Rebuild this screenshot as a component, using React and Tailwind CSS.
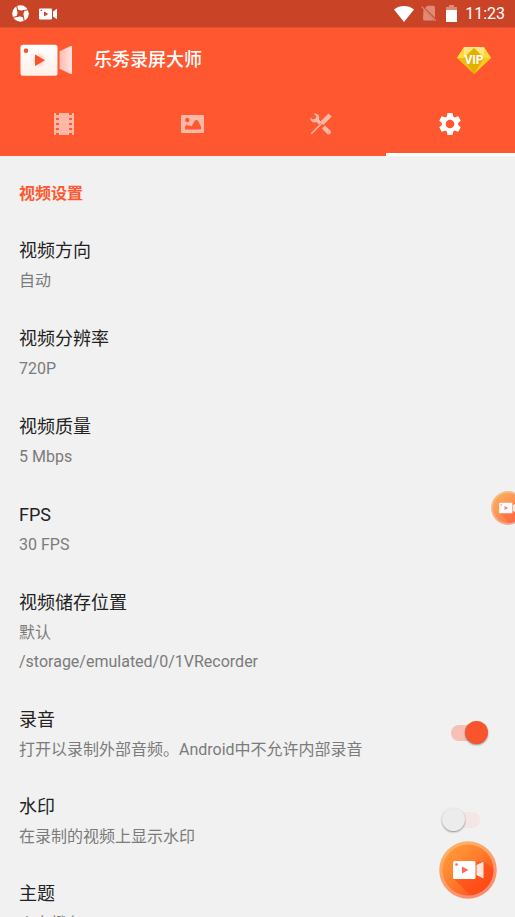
import React, { useState } from 'react';

const textSettings = [
  { title: '视频方向', lines: ['自动'] },
  { title: '视频分辨率', lines: ['720P'] },
  { title: '视频质量', lines: ['5 Mbps'] },
  { title: 'FPS', lines: ['30 FPS'] },
  { title: '视频储存位置', lines: ['默认', '/storage/emulated/0/1VRecorder'] },
];

function SpinnerMark() {
  return (
    <svg viewBox="0 0 17 17" className="size-[17px]" aria-hidden="true">
      <circle cx="8.5" cy="8.5" r="8.3" fill="#fff" />
      <path d="M5.500 4.500 8.500 5.500 12.500 5.500 11.500 8.500 11.500 12.500 8.500 11.500 4.500 11.500 5.500 8.500Z" fill="#c94427" />
      <path d="M5.800 6.500 4.800 1M10.500 5.800 16 4.800M11.200 10.500 12.200 16M6.500 11.200 1 12.200" stroke="#c94427" strokeWidth="1.100" />
    </svg>
  );
}

function MiniCamera() {
  return (
    <svg viewBox="0 0 18 12" className="h-3 w-[18px]" aria-hidden="true">
      <rect width="13" height="11" y=".5" rx="1" fill="#fff" />
      <path d="m14 3.5 4-2.8v10.6l-4-2.8Z" fill="#fff" />
      <path d="m5 3.5 4.3 2.5L5 8.5Z" fill="#c94427" />
      <circle cx="2.3" cy="2.5" r=".8" fill="#c94427" />
    </svg>
  );
}

function StatusBar() {
  return (
    <div className="flex h-7 shrink-0 items-center border-b border-[#e34f2d] bg-[#c94427] px-3 text-white">
      <SpinnerMark />
      <span className="ml-[10px] flex"><MiniCamera /></span>
      <div className="ml-auto flex items-center">
        <svg viewBox="0 0 20 16" className="h-4 w-5" aria-hidden="true">
          <path d="M0 3.5C5.5-1.1 14.500-1.100 20 3.500L10 16Z" fill="#fff" />
        </svg>
        <svg viewBox="0 0 16 17" className="ml-[7px] h-[17px] w-4" aria-hidden="true">
          <path d="M6.500.8H12.500Q14 .8 14 2.300V12.800L4 2.900ZM2.500 4.300 13.500 15.500H3.500Q2 15.500 2 14Z" fill="#df8a77" />
          <path d="m.7 1.700 14 14" stroke="#df8a77" strokeWidth="1.200" />
        </svg>
        <svg viewBox="0 0 11 17" className="ml-[9px] h-[17px] w-[11px]" aria-hidden="true">
          <path d="M0 2h3V0h5v2h3v3H0Z" fill="#df8a77" />
          <path d="M0 5h11v12H0Z" fill="#fff" />
        </svg>
        <time className="ml-2 -mr-[2px] text-[16px] leading-5">11:23</time>
      </div>
    </div>
  );
}

function Logo() {
  return (
    <svg viewBox="0 0 52 32" className="h-8 w-[52px]" aria-hidden="true">
      <defs>
        <linearGradient id="logoBody" x2="0" y2="1">
          <stop stopColor="#fff" />
          <stop offset="1" stopColor="#fff0e8" />
        </linearGradient>
        <linearGradient id="logoLens">
          <stop stopColor="#ffbcb0" />
          <stop offset="1" stopColor="#ffe4df" />
        </linearGradient>
        <radialGradient id="logoGlow">
          <stop stopColor="#ffb79d" />
          <stop offset="1" stopColor="#ffb79d" stopOpacity="0" />
        </radialGradient>
      </defs>
      <rect x=".5" y=".8" width="37" height="31" rx="2.500" fill="url(#logoBody)" />
      <path d="M39.500 7.200 50.600 2.100Q52 1.500 52 3v26q0 1.500-1.400.9L39.500 24.800Z" fill="url(#logoLens)" />
      <ellipse cx="19" cy="16" rx="7" ry="8" fill="url(#logoGlow)" />
      <path d="M15 10.500 25 16.300 15 22Z" fill="#f8522e" />
      <circle cx="6" cy="6.700" r="2.300" fill="#f8522e" />
    </svg>
  );
}

function VipBadge() {
  return (
    <svg viewBox="0 0 34 27" className="h-[27px] w-[34px]" aria-hidden="true">
      <path d="M7 0h20l7 11-17 16L0 11Z" fill="#edbd0e" />
      <path d="M7 0h20l7 11H0Z" fill="#ffd83a" />
      <path d="M7 0h20v9L17 1 7 9Z" fill="#ffe583" />
      <path d="m17 1 10 10-10 16L7 11Z" fill="#e2b000" />
      <path d="m17 27 17-16h-7Z" fill="#f6ca22" />
      <text x="17" y="17" textAnchor="middle" fontFamily="Roboto, sans-serif" fontWeight="700" fontSize="12" fill="#fff">VIP</text>
    </svg>
  );
}

function FilmIcon() {
  return (
    <svg viewBox="0 0 20 22" className="h-[22px] w-5" fill="currentColor" aria-hidden="true">
      <path fillRule="evenodd" d="M0 0h2v2h3V0h10v2h3V0h2v22h-2v-2h-3v2H5v-2H2v2H0ZM2 5v2h3V5Zm13 0v2h3V5ZM2 10v2h3v-2Zm13 0v2h3v-2ZM2 15v2h3v-2Zm13 0v2h3v-2Z" />
    </svg>
  );
}

function PhotoIcon() {
  return (
    <svg viewBox="0 0 23 18" className="h-[18px] w-[23px]" fill="currentColor" aria-hidden="true">
      <path fillRule="evenodd" d="M1 0h21q1 0 1 1v16q0 1-1 1H1q-1 0-1-1V1Q0 0 1 0Zm5.300 2.800a2.200 2.200 0 1 0 0 4.400 2.200 2.200 0 0 0 0-4.400ZM4 14.500h16v-2.700L17 5.700l-1.600-1-1.600 1-3 5.500L9 10.500 7.700 11 5.500 9.500 4 12Z" />
    </svg>
  );
}

function ToolsIcon() {
  return (
    <svg viewBox="0 0 22 22" className="size-[22px]" aria-hidden="true">
      <path d="m13.500 14 5.500 5.500" stroke="currentColor" strokeWidth="4.500" />
      <circle cx="18.700" cy="19.300" r="2.200" fill="currentColor" />
      <path d="M3.500.8Q7-.5 8.700 2.500 9.600 4.500 9 6.500l2.500 2.500L9 11.500 6.500 9Q3 10.200 1.200 7.800.3 6.500.5 4.500L2.800 6.500 5.700 5.600 6.300 3Z" fill="currentColor" />
      <path d="m10 9 8.500-8.500 3.200 3L13.500 12Z" fill="currentColor" />
      <path d="m1.300 20.700 11-11" stroke="currentColor" strokeWidth="1.500" />
    </svg>
  );
}

function GearIcon() {
  return (
    <svg viewBox="2 2 20 20" className="size-[22px]" fill="currentColor" aria-hidden="true">
      <path d="M19.430 12.980c.04-.32.07-.64.07-.98s-.03-.66-.07-.98l2.110-1.650c.19-.15.24-.42.12-.64l-2-3.460c-.12-.22-.39-.3-.61-.22l-2.490 1c-.52-.4-1.080-.73-1.690-.98l-.38-2.650C14.460 2.180 14.250 2 14 2h-4c-.25 0-.46.18-.49.42l-.38 2.650c-.61.25-1.170.59-1.690.98l-2.490-1c-.23-.09-.49 0-.61.22l-2 3.460c-.13.22-.07.49.12.64l2.110 1.650c-.04.32-.07.65-.07.98s.03.66.07.98l-2.110 1.650c-.19.15-.24.42-.12.64l2 3.460c.12.22.39.3.61.22l2.490-1c.52.4 1.080.73 1.690.98l.38 2.650c.03.24.24.42.49.42h4c.25 0 .46-.18.49-.42l.38-2.650c.61-.25 1.170-.59 1.690-.98l2.490 1c.23.09.49 0 .61-.22l2-3.460c.12-.22.07-.49-.12-.64l-2.110-1.650ZM12 15.900a3.900 3.900 0 1 1 0-7.800 3.900 3.900 0 0 1 0 7.800Z" />
    </svg>
  );
}

const tabs = [
  { label: '视频', Icon: FilmIcon },
  { label: '图片', Icon: PhotoIcon },
  { label: '工具', Icon: ToolsIcon },
  { label: '设置', Icon: GearIcon },
];

function Tabs() {
  const [active, setActive] = useState(3);
  return (
    <nav className="grid h-16 grid-cols-4">
      {tabs.map(({ label, Icon }, i) => (
        <button
          key={label}
          type="button"
          aria-label={label}
          onClick={() => setActive(i)}
          className={
            i === active
              ? 'flex items-center justify-center border-b-3 border-white pt-[2px] pr-px text-white'
              : 'flex items-center justify-center border-b-3 border-transparent pt-[2px] pr-px text-[#ffb8a6]'
          }
        >
          <Icon />
        </button>
      ))}
    </nav>
  );
}

function RowText({ title, lines }) {
  return (
    <>
      <span className="block text-[18px] leading-[30px] text-[#222]">{title}</span>
      {lines.map((line) => (
        <span key={line} className="block text-[16px] leading-[29px] text-[#7b7b7b]">{line}</span>
      ))}
    </>
  );
}

function SettingRow({ title, lines }) {
  return (
    <button type="button" className="block w-full pt-3 pb-[17px] text-left">
      <RowText title={title} lines={lines} />
    </button>
  );
}

function SwitchRow({ id, title, lines, initial }) {
  const [on, setOn] = useState(initial);
  return (
    <div className="flex items-center justify-between pt-3 pb-4">
      <label htmlFor={id}><RowText title={title} lines={lines} /></label>
      <input
        id={id}
        type="checkbox"
        checked={on}
        onChange={(e) => setOn(e.target.checked)}
        className="mr-4 mb-1 flex h-4 w-[29px] shrink-0 appearance-none items-center rounded-full bg-[#f4e6e4] before:-ml-[9px] before:size-[23px] before:shrink-0 before:rounded-full before:bg-[#ececec] before:shadow-[0_1px_2px_rgba(0,0,0,0.4)] checked:bg-[#f6c0b7] checked:before:ml-[14px] checked:before:bg-[#f8552f]"
      />
    </div>
  );
}

function RecordButtonArt({ id, className }) {
  return (
    <svg viewBox="0 0 58 58" className={className} aria-hidden="true">
      <defs>
        <linearGradient id={`${id}Face`} x1=".1" y1=".1" x2=".9" y2=".9">
          <stop stopColor="#ff9a36" />
          <stop offset=".5" stopColor="#ff7a2c" />
          <stop offset="1" stopColor="#ff4b1c" />
        </linearGradient>
        <linearGradient id={`${id}Rim`} x2=".5" y2="1">
          <stop stopColor="#f9b968" />
          <stop offset="1" stopColor="#fa8d70" />
        </linearGradient>
        <linearGradient id={`${id}Shade`} x2="1" y2="1">
          <stop stopColor="#ff5a1c" stopOpacity=".7" />
          <stop offset="1" stopColor="#ff4415" />
        </linearGradient>
        <clipPath id={`${id}Clip`}><circle cx="29" cy="29" r="25.500" /></clipPath>
      </defs>
      <circle cx="29" cy="29" r="28.800" fill={`url(#${id}Rim)`} />
      <circle cx="29" cy="29" r="25.500" fill={`url(#${id}Face)`} />
      <path d="m15 38 22-17 8-1 15 13v27H37Z" fill={`url(#${id}Shade)`} clipPath={`url(#${id}Clip)`} />
      <rect x="14" y="20" width="22.500" height="18" rx="1.500" fill="#fff" />
      <path d="m37.500 24 7-3.500v17l-7-3.500Z" fill="#ffe4dc" />
      <path d="m23 25.500 6.500 3.500-6.500 3.500Z" fill="#f66" />
      <circle cx="17.500" cy="23.500" r="1.300" fill="#f66" />
    </svg>
  );
}

export default function App() {
  return (
    <div className="relative flex h-screen flex-col overflow-hidden bg-[#f1f1f1] font-[Roboto,'Noto_Sans_CJK_SC',sans-serif]">
      <StatusBar />
      <header className="shrink-0 bg-[#ff5730]">
        <div className="flex h-16 items-center pr-6 pl-5">
          <Logo />
          <h1 className="ml-[22px] text-[18px] leading-7 font-medium text-white">乐秀录屏大师</h1>
          <button type="button" aria-label="VIP" className="ml-auto"><VipBadge /></button>
        </div>
        <Tabs />
      </header>
      <main className="min-h-0 flex-1 overflow-hidden px-[19px] pt-[22px]">
        <h2 className="mb-[15px] text-[16px] leading-[31px] font-bold text-[#ff5730]">视频设置</h2>
        {textSettings.map((s) => <SettingRow key={s.title} {...s} />)}
        <SwitchRow id="audio" title="录音" lines={['打开以录制外部音频。Android中不允许内部录音']} initial={true} />
        <SwitchRow id="watermark" title="水印" lines={['在录制的视频上显示水印']} initial={false} />
        <SettingRow title="主题" lines={['火力橙色']} />
      </main>
      <button type="button" aria-label="悬浮录制" className="absolute top-[491px] -right-[10px] opacity-80">
        <RecordButtonArt id="bubble" className="size-[34px]" />
      </button>
      <button type="button" aria-label="开始录制" className="absolute right-[18px] bottom-[18px]">
        <RecordButtonArt id="fab" className="size-[58px]" />
      </button>
    </div>
  );
}
